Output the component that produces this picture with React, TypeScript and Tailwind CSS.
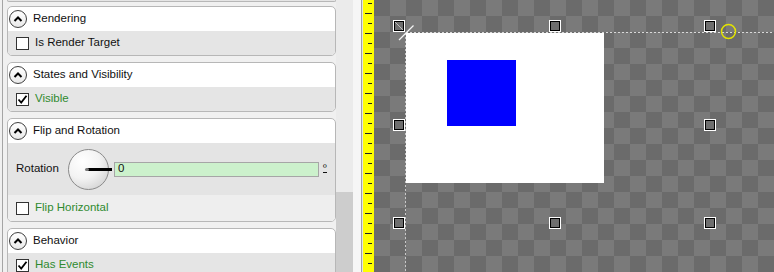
import React from "react";

function CollapseIcon() {
    return (
        <div className="flex h-[18px] w-[18px] shrink-0 items-center justify-center rounded-full border border-[#3f3f3f] bg-[linear-gradient(#ffffff,#e9e9e9)]">
            <svg width="10" height="8" viewBox="0 0 10 8">
                <polyline points="1.5,6 5,2.5 8.5,6" fill="none" stroke="#000" strokeWidth="2" />
            </svg>
        </div>
    );
}

function CheckBox({ checked }: { checked?: boolean }) {
    return (
        <div className="flex h-[13px] w-[13px] shrink-0 items-center justify-center border border-[#333] bg-white">
            {checked && (
                <svg width="11" height="11" viewBox="0 0 11 11">
                    <path d="M1.5 5.5 L4.2 8.5 L9.5 1.8" fill="none" stroke="#000" strokeWidth="1.8" />
                </svg>
            )}
        </div>
    );
}

function CheckRow({ label, checked, green, bg = "bg-[#e5e5e5]", h = "h-[24px]" }: {
    label: string;
    checked?: boolean;
    green?: boolean;
    bg?: string;
    h?: string;
}) {
    return (
        <div className={`flex ${h} items-center gap-[6px] pl-[8px] ${bg}`}>
            <CheckBox checked={checked} />
            <span className={green ? "text-[#2f8a2f]" : "text-[#111]"}>{label}</span>
        </div>
    );
}

function Group({ title, children }: { title: string; children: React.ReactNode }) {
    return (
        <div className="mt-[6px] overflow-hidden rounded-[5px] border border-[#b7b7b7] bg-white">
            <div className="flex h-[24px] items-center gap-[6px] pl-[1px] text-[#111]">
                <CollapseIcon />
                <span>{title}</span>
            </div>
            {children}
        </div>
    );
}

function Ruler() {
    const ticks = Array.from({ length: 28 }, (_, i) => 3 + i * 10);
    return (
        <svg width="11" height="272" className="block shrink-0 bg-[#ffff00]">
            {ticks.map((y, i) => (
                <rect key={y} x={i % 2 ? 2 : 5} y={y} width={i % 2 ? 7 : 4} height="1" fill="#222" />
            ))}
        </svg>
    );
}

function Handle({ x, y }: { x: string; y: string }) {
    return (
        <div className={`absolute ${x} ${y} h-[12px] w-[12px] border border-white`}>
            <div className="h-full w-full border border-black bg-[#6e6e6e]" />
        </div>
    );
}

export default function App() {
    return (
        <div className="flex h-[272px] w-[774px] overflow-hidden bg-[#f0f0f0] font-['Liberation_Sans',Arial,sans-serif] text-[11.5px]">
            {/* property panel */}
            <div className="w-[2px] shrink-0" />
            <div className="w-[1px] shrink-0 bg-[#a5a5a5]" />
            <div className="w-[4px] shrink-0" />
            <div className="flex w-[329px] shrink-0 flex-col">
                <div className="h-[2px] shrink-0 rounded-b-[5px] border-x border-b border-[#b7b7b7] bg-[#e5e5e5]" />
                <div className="-mt-[2px]">
                    <Group title="Rendering">
                        <CheckRow label="Is Render Target" />
                    </Group>
                    <Group title="States and Visibility">
                        <CheckRow label="Visible" checked green />
                    </Group>
                    <Group title="Flip and Rotation">
                        <div className="flex h-[52px] items-center bg-[#e4e4e4] pl-[8px]">
                            <span className="w-[52px] shrink-0 text-[#111]">Rotation</span>
                            <div className="relative h-[41px] w-[41px] shrink-0">
                                <div className="h-full w-full rounded-full border border-[#8a8a8a] bg-[radial-gradient(circle_at_35%_30%,#ffffff,#f3f3f3_45%,#c6c6c6)]" />
                                <div className="absolute left-[19px] top-[19px] h-[3px] w-[25px] bg-black" />
                                <div className="absolute left-[17px] top-[19px] h-[3px] w-[4px] rounded-full bg-[#7a7a7a]" />
                            </div>
                            <div className="ml-[5px] flex h-[15px] w-[205px] items-center border border-[#a6a6a6] bg-[#ccf1cc] pl-[3px] text-[#111]">
                                0
                            </div>
                            <span className="mb-[2px] ml-[4px] border-b border-[#111] text-[10px] leading-[9px] text-[#111]">º</span>
                        </div>
                        <CheckRow label="Flip Horizontal" green bg="bg-[#eeeeee]" h="h-[26px]" />
                    </Group>
                    <Group title="Behavior">
                        <CheckRow label="Has Events" checked green />
                    </Group>
                </div>
            </div>

            {/* scrollbar */}
            <div className="flex w-[17px] shrink-0 flex-col bg-[#ebebeb]">
                <div className="h-[192px] shrink-0" />
                <div className="flex-1 bg-[#cdcdcd]" />
            </div>
            <div className="w-[8px] shrink-0 bg-[#f6f6f6]" />
            <div className="w-[1px] shrink-0 bg-[#a0a0a0]" />
            <div className="w-[1px] shrink-0 bg-[#e2e2e2]" />
            <Ruler />

            {/* canvas */}
            <div className="relative flex-1 overflow-hidden bg-[conic-gradient(#7a7a7a_25%,#6b6b6b_0_50%,#7a7a7a_0_75%,#6b6b6b_0)] bg-[length:32px_32px]">
                <div className="absolute left-[32px] top-[33px] h-[150px] w-[198px] bg-white">
                    <div className="absolute left-[41px] top-[27px] h-[66px] w-[69px] bg-[#0000ff]" />
                </div>
                <svg className="absolute left-0 top-0" width="400" height="272">
                    <line x1="32" y1="32.5" x2="400" y2="32.5" stroke="#d8d8d8" strokeDasharray="2 2" />
                    <line x1="31.5" y1="33" x2="31.5" y2="272" stroke="#c8c8c8" strokeDasharray="2 2" />
                    <line x1="25" y1="40" x2="39.5" y2="25.5" stroke="#f4f4f4" strokeWidth="1.2" />
                    <circle cx="354.5" cy="31.5" r="7" fill="none" stroke="#e4e400" strokeWidth="1.5" />
                </svg>
                <Handle x="left-[19px]" y="top-[20px]" />
                <svg className="absolute left-[21px] top-[22px]" width="8" height="8">
                    <line x1="0" y1="0" x2="8" y2="8" stroke="#bdbdbd" />
                </svg>
                <Handle x="left-[175px]" y="top-[20px]" />
                <Handle x="left-[330px]" y="top-[20px]" />
                <Handle x="left-[19px]" y="top-[119px]" />
                <Handle x="left-[330px]" y="top-[119px]" />
                <Handle x="left-[19px]" y="top-[217px]" />
                <Handle x="left-[175px]" y="top-[217px]" />
                <Handle x="left-[330px]" y="top-[217px]" />
            </div>
        </div>
    );
}
